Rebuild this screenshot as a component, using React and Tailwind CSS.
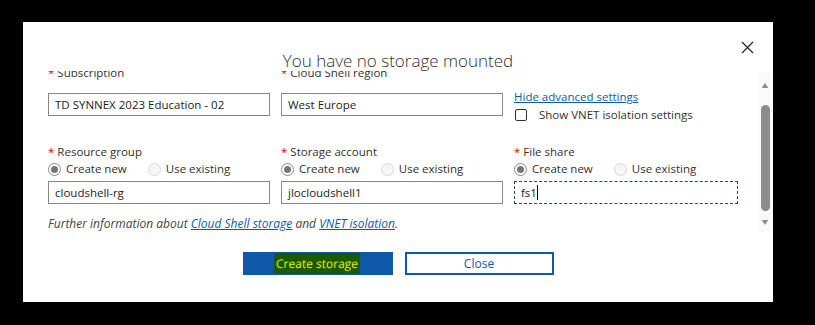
import React from "react";

const font = { fontFamily: '"Open Sans", "Noto Sans", sans-serif' };

const Label = ({ children }) => (
  <div className="h-[16px] leading-[16px] text-[11.5px] text-[#323130]">
    <span className="text-[#e00000] mr-[3px]">*</span>
    {children}
  </div>
);

const Radio = ({ checked, children }) => (
  <label className="flex items-center gap-[5px] text-[11.5px] text-[#323130]">
    {checked ? (
      <span className="w-[13px] h-[13px] rounded-full border border-[#8a8886] bg-white flex items-center justify-center">
        <span className="w-[7px] h-[7px] rounded-full bg-[#767676]" />
      </span>
    ) : (
      <span className="w-[13px] h-[13px] rounded-full border border-[#d6d6d6] bg-[#f6f6f6]" />
    )}
    {children}
  </label>
);

const Choice = () => (
  <div className="mt-[1px] h-[16px] flex items-center gap-[21px]">
    <Radio checked>Create new</Radio>
    <Radio>Use existing</Radio>
  </div>
);

const Input = ({ value, focused }) => (
  <div
    className={
      "mt-[4px] h-[23px] flex items-center px-[6px] text-[11.5px] text-[#1b1b1b] " +
      (focused ? "border border-dashed border-[#1e4e62]" : "border border-[#8a8886]")
    }
  >
    {value}
    {focused && <span className="w-px h-[15px] bg-black" />}
  </div>
);

export default function App() {
  return (
    <div className="w-[815px] h-[325px] bg-black pt-[22px] pl-[23px]" style={font}>
      <div className="w-[750px] h-[280px] bg-white flex flex-col">
        <div className="relative h-[49px] flex items-end justify-center">
          <h1 className="text-[17px] leading-[22px] font-light text-[#323130] translate-y-[1px]">
            You have no storage mounted
          </h1>
          <button className="absolute right-[19px] top-[19px] w-[13px] h-[13px]">
            <svg viewBox="0 0 13 13" className="w-[13px] h-[13px]">
              <path d="M1 1 L12 12 M12 1 L1 12" stroke="#222" strokeWidth="1.2" fill="none" />
            </svg>
          </button>
        </div>

        <div className="flex h-[161px]">
          <div className="flex-1 overflow-hidden pl-[25px] pr-[20px]">
            <div className="-mt-[6px] grid grid-cols-[222px_222px_224px] gap-x-[11px]">
              <div>
                <Label>Subscription</Label>
                <div className="mt-[12px] h-[23px] flex items-center px-[6px] text-[11.5px] text-[#1b1b1b] border border-[#8a8886]">
                  TD SYNNEX 2023 Education - 02
                </div>
              </div>
              <div>
                <Label>Cloud Shell region</Label>
                <div className="mt-[12px] h-[23px] flex items-center px-[6px] text-[11.5px] text-[#1b1b1b] border border-[#8a8886]">
                  West Europe
                </div>
              </div>
              <div className="pt-[24px]">
                <a href="#" className="block text-[11.5px] leading-[16px] text-[#0f5aa8] underline">
                  Hide advanced settings
                </a>
                <label className="mt-[2px] flex items-center gap-[12px] text-[11.5px] leading-[16px] text-[#323130]">
                  <span className="ml-[1px] w-[12px] h-[12px] border border-[#323130] rounded-[2px]" />
                  Show VNET isolation settings
                </label>
              </div>
            </div>

            <div className="mt-[21px] grid grid-cols-[222px_222px_224px] gap-x-[11px]">
              <div>
                <Label>Resource group</Label>
                <Choice />
                <Input value="cloudshell-rg" />
              </div>
              <div>
                <Label>Storage account</Label>
                <Choice />
                <Input value="jlocloudshell1" />
              </div>
              <div>
                <Label>File share</Label>
                <Choice />
                <Input value="fs1" focused />
              </div>
            </div>

            <p className="mt-[12px] text-[12px] leading-[16px] italic text-[#444]">
              Further information about{" "}
              <a href="#" className="text-[#0f5aa8] underline">Cloud Shell storage</a> and{" "}
              <a href="#" className="text-[#0f5aa8] underline">VNET isolation</a>.
            </p>
          </div>

          <div className="w-[14px] mr-[1px] mt-[1px] bg-[#fafafa] flex flex-col items-center">
            <svg viewBox="0 0 8 6" className="mt-[11px] w-[8px] h-[5px]">
              <path d="M0 6 L4 0 L8 6 Z" fill="#8c8c8c" />
            </svg>
            <div className="mt-[17px] w-[9px] h-[106px] rounded-full bg-[#8c8c8c]" />
            <svg viewBox="0 0 8 6" className="mt-[9px] w-[8px] h-[5px]">
              <path d="M0 0 L8 0 L4 6 Z" fill="#8c8c8c" />
            </svg>
          </div>
        </div>

        <div className="mt-[20px] flex justify-center gap-[12px]">
          <button className="w-[150px] h-[23px] bg-[#0f5aa8] flex items-center justify-center">
            <span className="px-[2px] h-[21px] leading-[21px] text-[12px] bg-[#1a5a00] text-[#e4f000] -skew-x-3">
              Create storage
            </span>
          </button>
          <button className="w-[149px] h-[23px] border-2 border-[#0f5aa8] text-[12px] text-[#0f5aa8] flex items-center justify-center">
            Close
          </button>
        </div>
      </div>
    </div>
  );
}
